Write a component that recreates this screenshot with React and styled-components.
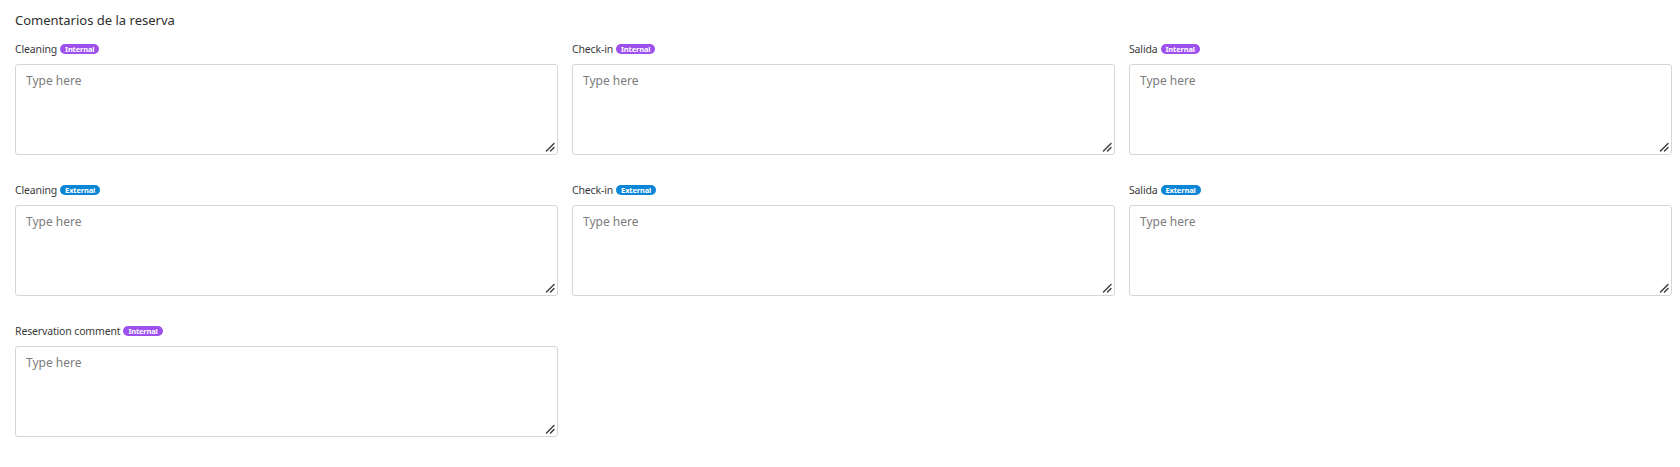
import React from "react";
import styled, { createGlobalStyle } from "styled-components";

const GlobalStyle = createGlobalStyle`
  html, body {
    margin: 0;
    padding: 0;
    background: #ffffff;
  }
  body {
    font-family: "Segoe UI", "Noto Sans", "Open Sans", Arial, sans-serif;
    color: #333333;
  }
`;

const Page = styled.section`
  padding: 10px 8px 0 15px;
`;

const Title = styled.h2`
  margin: 0 0 12px;
  font-size: 13px;
  line-height: 20px;
  font-weight: 400;
  color: #2f2f2f;
`;

const Grid = styled.div`
  display: grid;
  grid-template-columns: repeat(3, 1fr);
  column-gap: 14px;
  row-gap: 28px;
`;

const Field = styled.div`
  display: flex;
  flex-direction: column;
  gap: 8px;
  min-width: 0;
`;

const LabelRow = styled.label`
  display: flex;
  align-items: center;
  gap: 3px;
  height: 14px;
  font-size: 10.5px;
  color: #3a3a3a;
  letter-spacing: -0.15px;
`;

const Badge = styled.span`
  display: inline-flex;
  align-items: center;
  height: 10px;
  padding: 0 5px;
  border-radius: 6px;
  font-size: 7.5px;
  font-weight: 700;
  color: #ffffff;
  background: ${({ $tone }) => ($tone === "external" ? "#0a86d6" : "#9d50ee")};
`;

const InputWrap = styled.div`
  position: relative;
`;

const TextArea = styled.textarea`
  display: block;
  box-sizing: border-box;
  width: 100%;
  height: 91px;
  padding: 7px 10px;
  border: 1px solid #d6d6d6;
  border-radius: 3px;
  font-family: inherit;
  font-size: 12px;
  color: #333333;
  resize: none;
  outline: none;
  &::placeholder {
    color: #7c7c7c;
  }
`;

/* Drawn grip sitting over the textarea's bottom-right corner */
const Grip = styled.svg`
  position: absolute;
  right: 3px;
  bottom: 3px;
  width: 10px;
  height: 10px;
  pointer-events: none;
`;

function ResizeGrip() {
  return (
    <Grip viewBox="0 0 10 10" aria-hidden="true">
      <path d="M9 1.5 L1.5 9" stroke="#3c3c3c" strokeWidth="1.4" strokeLinecap="round" />
      <path d="M9 5.5 L5.5 9" stroke="#3c3c3c" strokeWidth="1.4" strokeLinecap="round" />
    </Grip>
  );
}

const fields = [
  { label: "Cleaning", tone: "internal" },
  { label: "Check-in", tone: "internal" },
  { label: "Salida", tone: "internal" },
  { label: "Cleaning", tone: "external" },
  { label: "Check-in", tone: "external" },
  { label: "Salida", tone: "external" },
  { label: "Reservation comment", tone: "internal" },
];

export default function App() {
  return (
    <>
      <GlobalStyle />
      <Page>
        <Title>Comentarios de la reserva</Title>
        <Grid>
          {fields.map((f, i) => (
            <Field key={i}>
              <LabelRow>
                {f.label}
                <Badge $tone={f.tone}>
                  {f.tone === "external" ? "External" : "Internal"}
                </Badge>
              </LabelRow>
              <InputWrap>
                <TextArea placeholder="Type here" />
                <ResizeGrip />
              </InputWrap>
            </Field>
          ))}
        </Grid>
      </Page>
    </>
  );
}
